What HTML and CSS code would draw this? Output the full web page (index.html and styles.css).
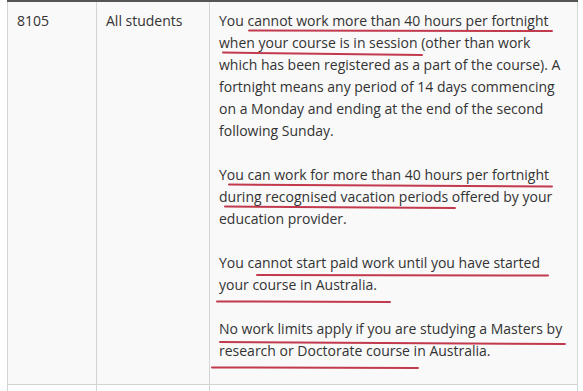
FILE: index.html
```html
<!DOCTYPE html>
<html lang="en">
<head>
<meta charset="utf-8">
<title>Visa condition 8105</title>
<link rel="stylesheet" href="styles.css">
</head>
<body>
<div class="page">
  <table class="conditions">
    <colgroup>
      <col class="c-code">
      <col class="c-who">
      <col class="c-text">
    </colgroup>
    <tbody>
      <tr>
        <td>8105</td>
        <td>All students</td>
        <td>
          <p>You cannot work more than 40 hours per fortnight when your course is in session (other than work which has been registered as a part of the course). A fortnight means any period of 14 days commencing on a Monday and ending at the end of the second following Sunday.</p>
          <p>You can work for more than 40 hours per fortnight during recognised vacation periods offered by your education provider.</p>
          <p>You cannot start paid work until you have started your course in Australia.</p>
          <p>No work limits apply if you are studying a Masters by research or Doctorate course in Australia.</p>
        </td>
      </tr>
      <tr class="next">
        <td></td>
        <td></td>
        <td></td>
      </tr>
    </tbody>
  </table>
  <svg class="marks" width="583" height="391" viewBox="0 0 583 391" aria-hidden="true">
    <g stroke="#c23a4e" stroke-width="2" stroke-linecap="round" fill="none">
      <path d="M249 30.5 L552 31"/>
      <path d="M223 52.5 L422 55"/>
      <path d="M229 184.5 L552 186.5"/>
      <path d="M225 206.5 L455 208"/>
      <path d="M257 275 L548 275.5"/>
      <path d="M217 301.5 L390 302"/>
      <path d="M220 342 L565 344"/>
      <path d="M212 367.5 L418 368"/>
    </g>
  </svg>
</div>
</body>
</html>
```
FILE: styles.css
```css
html, body {
  margin: 0;
  padding: 0;
  background: #ffffff;
}
body {
  font-family: "Open Sans", "Liberation Sans", Arial, sans-serif;
  font-size: 14px;
  line-height: 22px;
  color: #333333;
}
.page {
  position: relative;
  width: 583px;
  height: 391px;
  overflow: hidden;
  padding-left: 7px;
  box-sizing: border-box;
}
.conditions {
  border-collapse: collapse;
  table-layout: fixed;
  width: 570px;
  border-top: 2px solid #555555;
}
.c-code { width: 89px; }
.c-who { width: 113px; }
.c-text { width: 368px; }
.conditions td {
  border: 1px solid #d4d4d4;
  border-top: none;
  background: #f9f9f9;
  vertical-align: top;
  padding: 8px 10px 10px 9px;
}
.conditions td p {
  margin: 0 0 22px 0;
}
.conditions td p:last-child {
  margin-bottom: 12px;
}
.conditions .next td {
  background: #ffffff;
  height: 20px;
}
.marks {
  position: absolute;
  left: 0;
  top: 0;
  pointer-events: none;
}
```
